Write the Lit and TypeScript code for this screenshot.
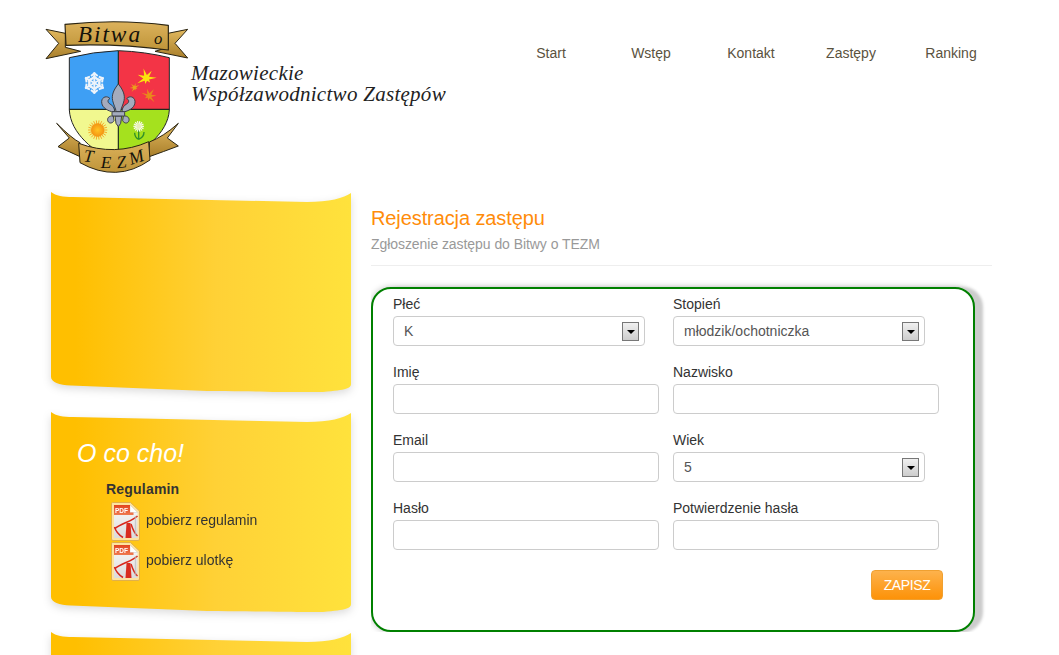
import { LitElement, html, css, svg } from "lit";
import { customElement } from "lit/decorators.js";

const ray = (cx: number, cy: number, r0: number, r1: number, n: number) => {
  const out: ReturnType<typeof svg>[] = [];
  for (let i = 0; i < n; i++) {
    const a = (i * 2 * Math.PI) / n;
    out.push(svg`<line x1=${cx + r0 * Math.cos(a)} y1=${cy + r0 * Math.sin(a)} x2=${cx + r1 * Math.cos(a)} y2=${cy + r1 * Math.sin(a)}></line>`);
  }
  return out;
};

const leaf = (cx: number, cy: number, r: number, rot: number, fill: string) => {
  const pts: string[] = [];
  const radii = [1, 0.32, 0.9, 0.3, 1, 0.28, 0.55, 0.25, 0.55, 0.28, 1, 0.3, 0.9, 0.32];
  radii.forEach((k, i) => {
    const a = (i * 2 * Math.PI) / radii.length + rot;
    pts.push(`${cx + r * k * Math.cos(a)},${cy + r * k * Math.sin(a)}`);
  });
  return svg`<polygon points=${pts.join(" ")} fill=${fill}></polygon>`;
};

const snow = () => {
  const cx = 193, cy = 219;
  const arms: ReturnType<typeof svg>[] = [];
  for (let i = 0; i < 6; i++) {
    const r = i * 60 - 90;
    arms.push(svg`<g transform="rotate(${r} ${cx} ${cy})">
      <line x1=${cx} y1=${cy} x2=${cx + 32} y2=${cy}></line>
      <polyline points="${cx + 10},${cy - 11} ${cx + 19},${cy} ${cx + 10},${cy + 11}" fill="none"></polyline>
      <polyline points="${cx + 21},${cy - 10} ${cx + 29},${cy} ${cx + 21},${cy + 10}" fill="none"></polyline>
    </g>`);
  }
  return svg`<g stroke="#eef4fb" stroke-width="6">${arms}</g>`;
};

const logo = html`<svg class="logo" viewBox="0 0 540 525" aria-label="Bitwa o TEZM">
  <defs>
    <linearGradient id="gold" x1="0" y1="0" x2="0" y2="1">
      <stop offset="0" stop-color="#dcb25c"></stop>
      <stop offset="1" stop-color="#bf9539"></stop>
    </linearGradient>
    <linearGradient id="gold2" x1="0" y1="0" x2="0" y2="1">
      <stop offset="0" stop-color="#e2b95f"></stop>
      <stop offset="1" stop-color="#a97f2b"></stop>
    </linearGradient>
    <radialGradient id="sun">
      <stop offset="0" stop-color="#ffc423"></stop>
      <stop offset="1" stop-color="#f49312"></stop>
    </radialGradient>
    <clipPath id="shield">
      <path d="M118 143 Q190 125 265 122 Q345 125 418 143 L418 300 C414 370 340 425 265 462 C190 425 122 370 118 300 Z"></path>
    </clipPath>
  </defs>

  <path d="M48 58 L106 70 L106 112 L152 124 L48 146 L86 100 Z" fill="url(#gold2)" stroke="#2a2412" stroke-width="3" stroke-linejoin="round"></path>
  <path d="M473 58 L414 70 L414 112 L375 124 L473 144 L435 100 Z" fill="url(#gold2)" stroke="#2a2412" stroke-width="3" stroke-linejoin="round"></path>

  <g clip-path="url(#shield)">
    <rect x="110" y="115" width="155" height="183" fill="#3e9ff4"></rect>
    <rect x="265" y="115" width="160" height="183" fill="#f33446"></rect>
    <rect x="110" y="298" width="155" height="170" fill="#f1f88f"></rect>
    <rect x="265" y="298" width="160" height="170" fill="#a5e11e"></rect>
  </g>
  <path d="M118 143 Q190 125 265 122 Q345 125 418 143 L418 300 C414 370 340 425 265 462 C190 425 122 370 118 300 Z" fill="none" stroke="#222" stroke-width="3"></path>
  <path d="M265 122 V462 M118 298 H418" fill="none" stroke="#1c2a1c" stroke-width="3.5"></path>

  ${snow()}
  ${leaf(349, 205, 31, -1.85, "#fbe40e")}
  ${leaf(314, 233, 16, -2.3, "#e9a31a")}
  ${leaf(357, 258, 25, -0.95, "#e8891c")}

  <g stroke="#f49a12" stroke-width="2.5">${ray(203, 360, 18, 29, 22)}</g>
  <circle cx="203" cy="360" r="20" fill="url(#sun)"></circle>

  <path d="M326 360 V388 M326 388 C318 384 314 376 314 368 M326 388 C336 384 342 376 342 366" fill="none" stroke="#2f8f2a" stroke-width="4"></path>
  <g stroke="#fbfbf0" stroke-width="3.5">${ray(326, 349, 5, 16, 14)}</g>
  <circle cx="326" cy="349" r="7" fill="#e8eebc"></circle>

  <g fill="#a4abbd" stroke="#3c3f48" stroke-width="3" stroke-linejoin="round">
    <path d="M245 305 C228 300 214 290 215 274 C216 260 232 256 240 266 C232 268 232 278 240 282 C248 286 254 294 254 305 Z"></path>
    <path d="M285 305 C302 300 316 290 315 274 C314 260 298 256 290 266 C298 268 298 278 290 282 C282 286 276 294 276 305 Z"></path>
    <path d="M265 222 C252 238 244 254 248 272 C251 286 258 296 258 305 H272 C272 296 279 286 282 272 C286 254 278 238 265 222 Z"></path>
    <path d="M250 318 C236 316 230 326 234 334 C238 342 248 340 252 332 Z"></path>
    <path d="M280 318 C294 316 300 326 296 334 C292 342 282 340 278 332 Z"></path>
    <path d="M255 318 H275 L272 340 L265 350 L258 340 Z"></path>
    <rect x="246" y="305" width="38" height="13" rx="3"></rect>
  </g>

  <path d="M105 43 Q265 26 415 46 L415 120 Q265 100 108 106 Z" fill="url(#gold)" stroke="#2a2412" stroke-width="3.5" stroke-linejoin="round"></path>
  <text class="bn wide" x="143" y="97" font-size="70">Bitwa</text>
  <text class="bn" x="372" y="102" font-size="50">o</text>

  <path d="M80 340 Q125 385 150 398 L150 440 Q118 425 84 410 L118 384 Z" fill="url(#gold2)" stroke="#2a2412" stroke-width="3" stroke-linejoin="round"></path>
  <path d="M445 340 Q400 380 358 396 L358 440 Q400 425 445 408 L412 384 Z" fill="url(#gold2)" stroke="#2a2412" stroke-width="3" stroke-linejoin="round"></path>
  <path d="M146 400 Q255 440 356 395 L360 450 Q260 520 150 458 Z" fill="url(#gold)" stroke="#2a2412" stroke-width="3" stroke-linejoin="round"></path>
  <text class="bn" x="160" y="454" font-size="52" transform="rotate(6 160 454)">T</text>
  <text class="bn" x="212" y="473" font-size="52">E</text>
  <text class="bn" x="262" y="475" font-size="52" transform="rotate(-6 262 475)">Z</text>
  <text class="bn" x="303" y="465" font-size="54" transform="rotate(-18 303 465)">M</text>
</svg>`;

const pdf = html`<svg class="pdf" viewBox="0 0 29 39">
  <defs>
    <linearGradient id="pg" x1="0" y1="0" x2="0" y2="1">
      <stop offset="0" stop-color="#fafafa"></stop>
      <stop offset="1" stop-color="#dcdcdc"></stop>
    </linearGradient>
    <linearGradient id="ph" x1="0" y1="0" x2="0" y2="1">
      <stop offset="0" stop-color="#e2441f"></stop>
      <stop offset="1" stop-color="#ef7a50"></stop>
    </linearGradient>
  </defs>
  <path d="M1.5 .5 H19.5 L28.5 9 V37 Q28.5 38.5 27 38.5 H2 Q.5 38.5 .5 37 V2 Q.5 .5 1.5 .5 Z" fill="#fde3a0" stroke="#e0b04c"></path>
  <path d="M3 3 H18.5 L26.5 10.5 V36 H3 Z" fill="url(#pg)"></path>
  <path d="M19 3 L26.5 10.5 H19 Z" fill="#fff" stroke="#c9c9c9" stroke-width=".5"></path>
  <path d="M3 3 H19 V10.5 H22.5 V13 H3 Z" fill="url(#ph)"></path>
  <text class="pdft" x="4" y="11">PDF</text>
  <path d="M26.5 14 C20 20 10 21 3.5 27 M3.5 25 C5 30 8 33 12 35.5 M20 22 C22 28 24 32 26.5 34" fill="none" stroke="#d8271c" stroke-width="1.5"></path>
  <path d="M15.5 21 L19.5 21 L20.5 36 H14.5 Z" fill="#d92c1f"></path>
  <path d="M24.5 14 V34" stroke="#bdbdbd" stroke-width="1.5" opacity=".7"></path>
</svg>`;

@customElement("app-root")
export class AppRoot extends LitElement {
  static styles = css`
    :host {
      display: block;
      width: 1059px;
      height: 655px;
      overflow: hidden;
      background: #fff;
      font-family: "Liberation Sans", Arial, sans-serif;
      font-size: 14px;
      color: #333;
    }
    .header {
      display: flex;
      height: 192px;
      box-sizing: border-box;
      padding: 10px 58px 0 30px;
    }
    .logo { width: 180px; height: 175px; flex: none; }
    .bn { font-family: "Liberation Serif", serif; font-style: italic; fill: #14120a; letter-spacing: 3px; }
    .bn.wide { letter-spacing: 6px; }
    .tag {
      font-family: "Liberation Serif", serif;
      font-style: italic;
      font-size: 21px;
      line-height: 21px;
      letter-spacing: 0.28px;
      color: #222;
      margin: 53px 0 0 -19px;
      white-space: nowrap;
      flex: none;
      position: relative;
    }
    .nav { display: flex; margin: 33px 0 0 auto; }
    .nav a { width: 100px; line-height: 20px; text-align: center; color: #5a5240; text-decoration: none; }
    .main { display: flex; padding-left: 51px; gap: 20px; }
    .side { width: 300px; flex: none; display: flex; flex-direction: column; gap: 20px; }
    .card { filter: drop-shadow(0 3px 4px rgba(0, 0, 0, 0.14)); }
    .card-in {
      height: 200px;
      box-sizing: border-box;
      padding: 26px 0 0 26px;
      background: linear-gradient(to right, #ffbf00 8%, #ffd136 55%, #ffe23c 100%);
      clip-path: path("M0 0 C5 4 12 5 22 5 L256 10 C278 10 293 6 300 1 L300 192 C300 196 296 198 272 200 C260 200.5 240 200 156 199 L20 193.5 C8 193 0 190 0 185 Z");
    }
    h3 {
      margin: 0;
      font-size: 25px;
      line-height: 30px;
      font-weight: normal;
      font-style: italic;
      color: #fff;
    }
    .reg { margin: 11px 0 0 29px; font-weight: bold; line-height: 20px; letter-spacing: 0.2px; color: #333; }
    .file { display: flex; align-items: center; gap: 6px; margin-left: 34px; height: 40px; color: #333; }
    .regs { margin-top: 1px; }
    .pdf { width: 29px; height: 39px; flex: none; margin-top: 3px; }
    .pdft { font-family: "Liberation Sans", sans-serif; font-weight: bold; font-size: 6.5px; fill: #fff; }
    .content { width: 621px; flex: none; }
    h2 {
      margin: 14px 0 0;
      font-size: 20px;
      line-height: 24px;
      font-weight: normal;
      letter-spacing: -0.1px;
      color: #ff8c0a;
    }
    .sub { margin-top: 4px; line-height: 20px; letter-spacing: -0.06px; color: #999; }
    hr { border: 0; border-top: 1px solid #eee; margin: 11px 0 0; }
    .clip { overflow: hidden; padding: 21px 17px 0 0; width: 604px; }
    .form {
      box-sizing: border-box;
      width: 604px;
      height: 345px;
      border: 2px solid #008000;
      border-radius: 20px;
      background: #fff;
      box-shadow: 8px 0 3px #ccc, 0 0 6px rgba(0, 0, 0, 0.25);
      padding: 5px 0 0 20px;
      display: flex;
      flex-direction: column;
    }
    .grid { display: grid; grid-template-columns: 280px 266px; row-gap: 16px; }
    label { display: block; line-height: 20px; margin-bottom: 2px; color: #333; }
    input {
      display: block;
      box-sizing: border-box;
      width: 266px;
      height: 30px;
      border: 1px solid #ccc;
      border-radius: 4px;
      background: #fff;
      padding: 0 10px;
      font: inherit;
      margin: 0;
    }
    .sel { position: relative; width: 252px; height: 30px; }
    select {
      appearance: none;
      -webkit-appearance: none;
      display: block;
      box-sizing: border-box;
      width: 100%;
      height: 30px;
      border: 1px solid #ccc;
      border-radius: 4px;
      background: #fff;
      padding: 0 10px;
      font: inherit;
      color: #555;
      margin: 0;
    }
    .arrow {
      position: absolute;
      right: 6px;
      top: 6px;
      width: 17px;
      height: 19px;
      box-sizing: border-box;
      border: 1px solid #777;
      background: linear-gradient(#f0f0f0, #cdcdcd);
      display: flex;
      align-items: center;
      justify-content: center;
      pointer-events: none;
    }
    .arrow::after {
      content: "";
      border-left: 4px solid transparent;
      border-right: 4px solid transparent;
      border-top: 4px solid #000;
    }
    .actions { display: flex; justify-content: flex-end; margin: 20px 30px 0 0; }
    button {
      width: 72px;
      height: 30px;
      border: 1px solid #f0a030;
      border-radius: 4px;
      background: linear-gradient(#fdb24c, #fd9208);
      color: #fff;
      font: inherit;
      letter-spacing: -0.4px;
      padding: 0;
    }
  `;

  private sel(label: string, opts: string[]) {
    return html`<div>
      <label>${label}</label>
      <div class="sel">
        <select aria-label=${label}>${opts.map((o) => html`<option>${o}</option>`)}</select>
        <span class="arrow"></span>
      </div>
    </div>`;
  }

  private inp(label: string, type = "text") {
    return html`<div><label>${label}</label><input type=${type} aria-label=${label} /></div>`;
  }

  render() {
    return html`
      <div class="header">
        ${logo}
        <div class="tag">Mazowieckie<br />Współzawodnictwo Zastępów</div>
        <nav class="nav">
          ${["Start", "Wstęp", "Kontakt", "Zastępy", "Ranking"].map((n) => html`<a href="#">${n}</a>`)}
        </nav>
      </div>
      <div class="main">
        <aside class="side">
          <div class="card"><div class="card-in"></div></div>
          <div class="card">
            <div class="card-in">
              <h3>O co cho!</h3>
              <div class="reg">Regulamin</div>
              <div class="regs">
                <div class="file">${pdf}<span>pobierz regulamin</span></div>
                <div class="file">${pdf}<span>pobierz ulotkę</span></div>
              </div>
            </div>
          </div>
          <div class="card"><div class="card-in"></div></div>
        </aside>
        <section class="content">
          <h2>Rejestracja zastępu</h2>
          <div class="sub">Zgłoszenie zastępu do Bitwy o TEZM</div>
          <hr />
          <div class="clip">
            <form class="form">
              <div class="grid">
                ${this.sel("Płeć", ["K", "M"])}
                ${this.sel("Stopień", ["młodzik/ochotniczka"])}
                ${this.inp("Imię")}
                ${this.inp("Nazwisko")}
                ${this.inp("Email")}
                ${this.sel("Wiek", ["5"])}
                ${this.inp("Hasło", "password")}
                ${this.inp("Potwierdzenie hasła", "password")}
              </div>
              <div class="actions"><button type="button">ZAPISZ</button></div>
            </form>
          </div>
        </section>
      </div>
    `;
  }
}
